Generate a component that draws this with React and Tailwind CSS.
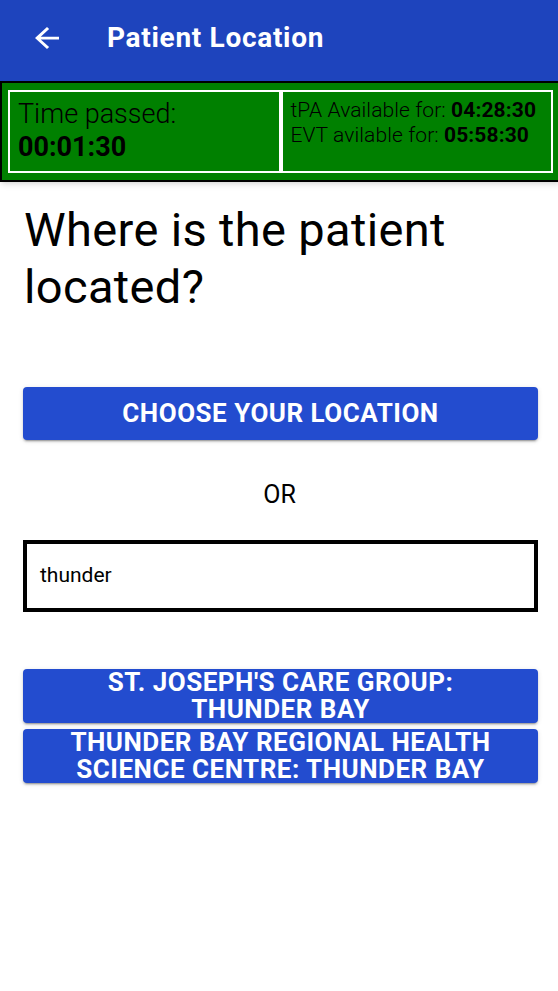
import React from "react";

const btnShadow =
  "shadow-[0_3px_1px_-2px_rgba(0,0,0,0.2),0_2px_2px_0_rgba(0,0,0,0.14),0_1px_5px_0_rgba(0,0,0,0.12)]";

export default function App() {
  return (
    <div className="w-[558px] min-h-[991px] bg-white overflow-hidden font-['Roboto','Liberation_Sans',sans-serif] text-black">
      <header className="h-[81px] bg-[#1e44bd] flex items-center pb-[5px]">
        <svg className="ml-[35px]" width="24" height="22" viewBox="4 4 16 16" preserveAspectRatio="none" fill="white">
          <path d="M20 11H7.83l5.59-5.59L12 4l-8 8 8 8 1.41-1.41L7.83 13H20v-2z" />
        </svg>
        <h1 className="ml-[48px] text-white text-[28px] font-bold leading-none tracking-[0.7px]">Patient Location</h1>
      </header>
      <div className="w-[561px] border-2 border-black bg-[#008000] px-[6px] py-[7px] flex shadow-md">
        <div className="w-[273px] h-[83px] border-2 border-white pl-[8px] pt-[6px] flex flex-col">
          <div className="text-[27px] leading-[33px] font-light">Time passed:</div>
          <div className="text-[27px] leading-[33px] font-bold">00:01:30</div>
        </div>
        <div className="w-[273px] h-[83px] border-2 border-white pl-[8px] pt-[6px] flex flex-col">
          <div className="text-[21px] leading-[25px] font-light tracking-[0.1px]">
            tPA Available for: <span className="font-bold">04:28:30</span>
          </div>
          <div className="text-[21px] leading-[25px] font-light tracking-[0.1px]">
            EVT avilable for: <span className="font-bold">05:58:30</span>
          </div>
        </div>
      </div>
      <main className="ml-[23px] w-[515px] flex flex-col">
        <h2 className="mt-[19px] ml-[1px] text-[47px] leading-[57px] font-normal tracking-[0.35px]">
          Where is the patient located?
        </h2>
        <button className={`mt-[72px] h-[53px] w-full rounded-[4px] bg-[#234ccf] text-white text-[26px] font-bold uppercase tracking-[0.5px] ${btnShadow}`}>
          Choose your location
        </button>
        <div className="mt-[41px] text-center text-[25px] leading-[28px] pr-[2px]">OR</div>
        <div className="mt-[31px] h-[72px] w-full border-4 border-black flex items-center pl-[13px]">
          <span className="text-[21px]">thunder</span>
        </div>
        <div className="mt-[57px] flex flex-col gap-[6px]">
          <button className={`h-[54px] w-full rounded-[4px] bg-[#234ccf] text-white text-[26px] leading-[27px] font-bold uppercase tracking-[0.5px] ${btnShadow}`}>
            St. Joseph's Care Group:<br />Thunder Bay
          </button>
          <button className={`h-[54px] w-full rounded-[4px] bg-[#234ccf] text-white text-[26px] leading-[27px] font-bold uppercase tracking-[0.5px] ${btnShadow}`}>
            Thunder Bay Regional Health<br />Science Centre: Thunder Bay
          </button>
        </div>
      </main>
    </div>
  );
}
